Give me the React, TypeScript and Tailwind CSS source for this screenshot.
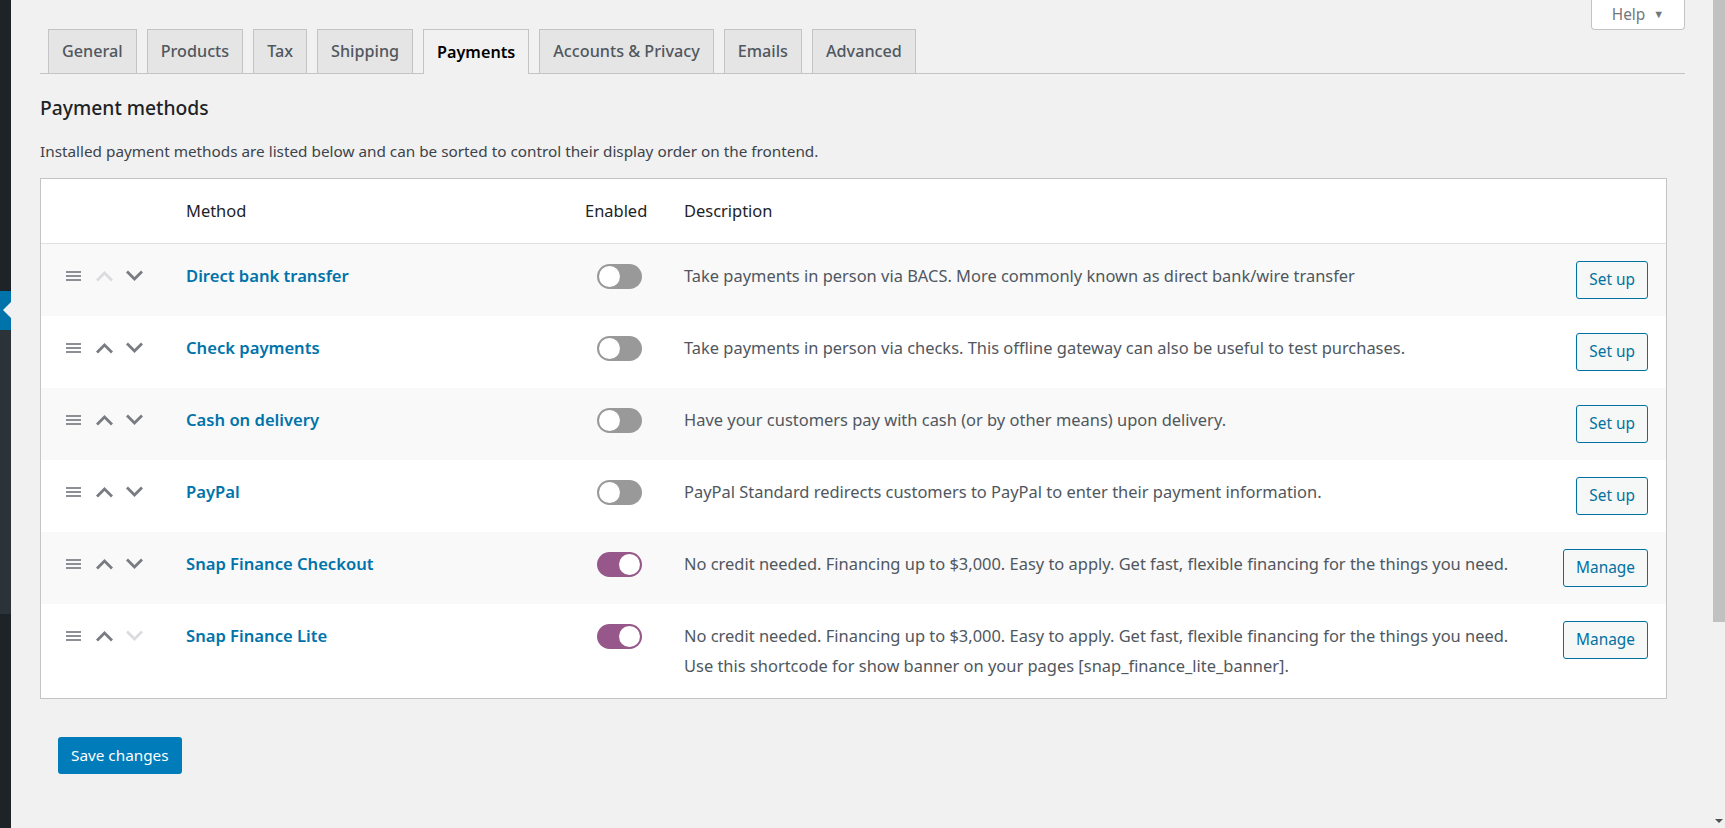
import React from "react";

type Row = {
  name: string;
  desc: string[];
  on: boolean;
  btn: string;
  upDisabled: boolean;
  downDisabled: boolean;
};

const rows: Row[] = [
  {
    name: "Direct bank transfer",
    desc: ["Take payments in person via BACS. More commonly known as direct bank/wire transfer"],
    on: false,
    btn: "Set up",
    upDisabled: true,
    downDisabled: false,
  },
  {
    name: "Check payments",
    desc: ["Take payments in person via checks. This offline gateway can also be useful to test purchases."],
    on: false,
    btn: "Set up",
    upDisabled: false,
    downDisabled: false,
  },
  {
    name: "Cash on delivery",
    desc: ["Have your customers pay with cash (or by other means) upon delivery."],
    on: false,
    btn: "Set up",
    upDisabled: false,
    downDisabled: false,
  },
  {
    name: "PayPal",
    desc: ["PayPal Standard redirects customers to PayPal to enter their payment information."],
    on: false,
    btn: "Set up",
    upDisabled: false,
    downDisabled: false,
  },
  {
    name: "Snap Finance Checkout",
    desc: ["No credit needed. Financing up to $3,000. Easy to apply. Get fast, flexible financing for the things you need."],
    on: true,
    btn: "Manage",
    upDisabled: false,
    downDisabled: false,
  },
  {
    name: "Snap Finance Lite",
    desc: [
      "No credit needed. Financing up to $3,000. Easy to apply. Get fast, flexible financing for the things you need.",
      "Use this shortcode for show banner on your pages [snap_finance_lite_banner].",
    ],
    on: true,
    btn: "Manage",
    upDisabled: false,
    downDisabled: true,
  },
];

const tabs = ["General", "Products", "Tax", "Shipping", "Payments", "Accounts & Privacy", "Emails", "Advanced"];

function Hamburger() {
  return (
    <svg width="15" height="12" viewBox="0 0 15 12">
      <rect x="0" y="1" width="15" height="2" fill="#8c8f94" />
      <rect x="0" y="5" width="15" height="2" fill="#8c8f94" />
      <rect x="0" y="9" width="15" height="2" fill="#8c8f94" />
    </svg>
  );
}

function Chevron({ up, disabled }: { up: boolean; disabled: boolean }) {
  return (
    <svg width="19" height="12" viewBox="0 0 19 12">
      <path
        d={up ? "M2 10.5 L9.5 3 L17 10.5" : "M2 1.5 L9.5 9 L17 1.5"}
        fill="none"
        stroke={disabled ? "#dcdcde" : "#787c82"}
        strokeWidth="2.8"
      />
    </svg>
  );
}

function Toggle({ on }: { on: boolean }) {
  return (
    <div
      className={
        on
          ? "flex h-[25px] w-[45px] items-center justify-end rounded-full bg-[#96588a] px-[2px]"
          : "flex h-[25px] w-[45px] items-center justify-start rounded-full bg-[#999999] px-[2px]"
      }
    >
      <div className="h-[21px] w-[21px] rounded-full bg-white" />
    </div>
  );
}

export default function App() {
  return (
    <div className="flex h-[828px] w-[1725px] overflow-hidden bg-[#f1f1f1] font-['Noto_Sans',sans-serif] text-[#3c434a]">
      {/* admin sidebar strip */}
      <div className="flex w-[11px] shrink-0 flex-col">
        <div className="h-[291px] bg-[#1d2327]" />
        <div className="relative h-[39px] bg-[#0073aa]">
          <div className="absolute right-0 top-[11px] h-0 w-0 border-y-[8px] border-r-[8px] border-y-transparent border-r-[#f1f1f1]" />
        </div>
        <div className="h-[284px] bg-[#2c3338]" />
        <div className="flex-1 bg-[#1d2327]" />
      </div>

      {/* main content */}
      <div className="flex min-w-0 flex-1 flex-col pl-[29px] pr-[28px]">
        <div className="flex h-[30px] justify-end">
          <div className="flex h-[30px] w-[94px] items-center justify-center gap-[8px] rounded-b-[4px] border border-t-0 border-[#c3c4c7] bg-white text-[15.4px] text-[#72777c]">
            <span>Help</span>
            <span className="text-[11px]">▼</span>
          </div>
        </div>

        <div className="flex h-[44px] items-end gap-[10px] border-b border-[#c3c4c7] pl-[8px]">
          {tabs.map((t) => (
            <div
              key={t}
              className={
                t === "Payments"
                  ? "-mb-px flex h-[45px] items-center border border-b-0 border-[#c3c4c7] bg-[#f1f1f1] px-[13px] text-[16.2px] font-semibold text-black"
                  : "flex h-[44px] items-center border border-b-0 border-[#c3c4c7] bg-[#e5e5e5] px-[13px] text-[16.2px] font-medium text-[#50575e]"
              }
            >
              {t}
            </div>
          ))}
        </div>

        <h2 className="mt-[22px] text-[19.3px] leading-[24px] font-medium text-[#1d2327]">Payment methods</h2>
        <p className="mt-[21px] text-[15.3px] leading-[21px] text-[#3c434a]">
          Installed payment methods are listed below and can be sorted to control their display order on the frontend.
        </p>

        {/* gateways table */}
        <div className="mr-[18px] mt-[16px] border border-[#c3c4c7] bg-white text-[16.45px]">
          <div className="flex h-[65px] items-center border-b border-[#e1e1e1] bg-white text-[#1d2327]">
            <div className="w-[145px] shrink-0" />
            <div className="w-[399px] shrink-0">Method</div>
            <div className="w-[99px] shrink-0">Enabled</div>
            <div className="flex-1">Description</div>
          </div>
          {rows.map((r, i) => (
            <div
              key={r.name}
              className={i % 2 === 0 ? "flex items-start bg-[#f9f9f9] py-[17px]" : "flex items-start bg-white py-[17px]"}
            >
              <div className="flex h-[30px] w-[145px] shrink-0 items-center gap-[14px] pl-[25px]">
                <Hamburger />
                <div className="flex items-center gap-[11px]">
                  <Chevron up disabled={r.upDisabled} />
                  <Chevron up={false} disabled={r.downDisabled} />
                </div>
              </div>
              <div className="w-[399px] shrink-0 text-[16.6px] leading-[30px] font-semibold text-[#0073aa]">{r.name}</div>
              <div className="flex h-[30px] w-[99px] shrink-0 items-center pl-[12px]">
                <Toggle on={r.on} />
              </div>
              <div className="flex-1 leading-[30px] text-[#50575e]">
                {r.desc.map((d) => (
                  <div key={d} className="whitespace-nowrap">
                    {d}
                  </div>
                ))}
              </div>
              <div className="flex w-[130px] shrink-0 justify-end pr-[18px]">
                <div className="flex h-[38px] items-center rounded-[3px] border border-[#0071a1] bg-[#f6f7f7] px-[12px] text-[15.4px] text-[#0071a1]">
                  {r.btn}
                </div>
              </div>
            </div>
          ))}
        </div>

        <div className="mt-[38px] pl-[18px]">
          <div className="inline-flex h-[37px] items-center rounded-[3px] bg-[#007cba] px-[13px] text-[15.3px] text-white">
            Save changes
          </div>
        </div>
      </div>

      {/* scrollbar */}
      <div className="flex w-[12px] shrink-0 flex-col bg-[#f1f1f1]">
        <div className="h-[622px] bg-[#c1c1c1]" />
        <div className="flex-1" />
        <div className="flex h-[14px] items-center justify-center">
          <div className="h-0 w-0 border-x-[4px] border-t-[4px] border-x-transparent border-t-[#505050]" />
        </div>
      </div>
    </div>
  );
}
